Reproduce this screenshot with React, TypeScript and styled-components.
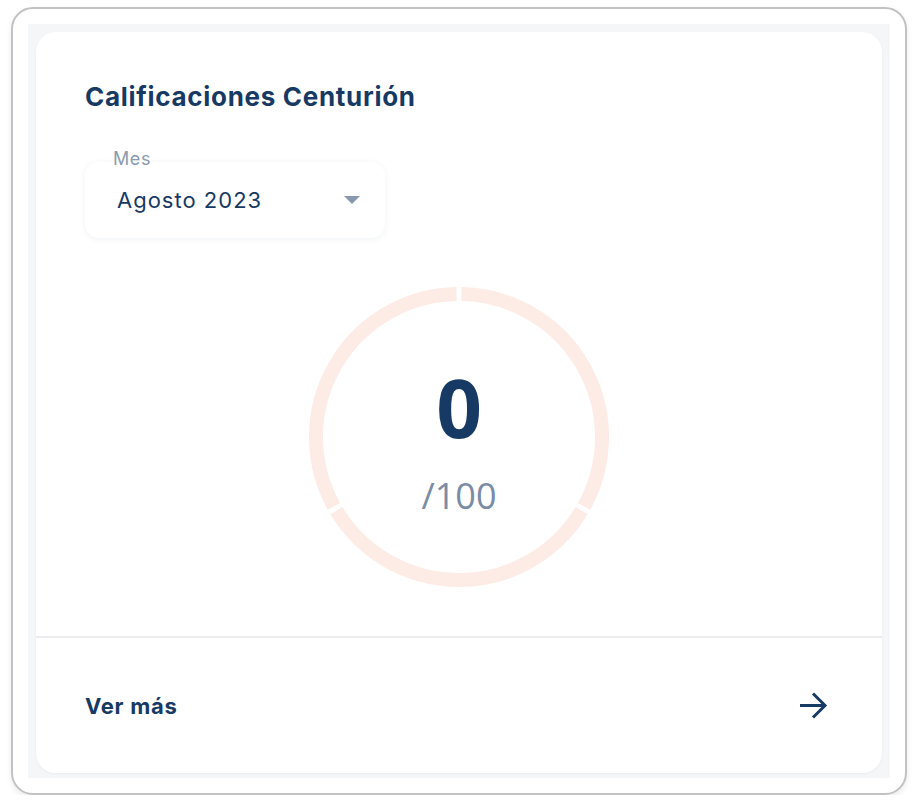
import React from 'react'
import styled, { createGlobalStyle } from 'styled-components'

const GlobalStyle = createGlobalStyle`
  body {
    margin: 0;
    background: #ffffff;
    font-family: Inter, 'Liberation Sans', sans-serif;
  }
`

const Frame = styled.div`
  box-sizing: border-box;
  margin: 7px 0 0 11px;
  width: 896px;
  height: 788px;
  padding: 15px;
  border: 2px solid #c2c2c2;
  border-radius: 22px;
  background: #ffffff;
  box-shadow: 0 3px 6px rgba(0, 0, 0, 0.08);
`

const Backdrop = styled.div`
  box-sizing: border-box;
  height: 100%;
  padding: 8px 8px 5px 8px;
  background: #f5f6f8;
`

const Card = styled.div`
  box-sizing: border-box;
  height: 100%;
  display: flex;
  flex-direction: column;
  background: #ffffff;
  border-radius: 20px;
  box-shadow: 0 1px 3px rgba(30, 50, 80, 0.05);
`

const Body = styled.div`
  flex: 1;
  display: flex;
  flex-direction: column;
  padding: 50px 49px 0 49px;
`

const Title = styled.h2`
  margin: 0;
  font-size: 26px;
  line-height: 30px;
  letter-spacing: 0.7px;
  font-weight: 700;
  color: #173a64;
`

const SelectWrap = styled.div`
  position: relative;
  margin-top: 50px;
  width: 300px;
  height: 76px;
  border-radius: 14px;
  background: #ffffff;
  box-shadow: 0 1px 6px rgba(30, 50, 80, 0.07);
  display: flex;
  align-items: center;
  justify-content: space-between;
  padding: 0 25px 0 32px;
  box-sizing: border-box;
`

const SelectLabel = styled.span`
  position: absolute;
  left: 28px;
  top: -13px;
  font-size: 18px;
  line-height: 20px;
  letter-spacing: 0.6px;
  color: #8b9bb2;
`

const SelectValue = styled.span`
  font-size: 22px;
  letter-spacing: 1px;
  color: #173a64;
`

const Caret = styled.span`
  width: 0;
  height: 0;
  border-left: 8px solid transparent;
  border-right: 8px solid transparent;
  border-top: 8px solid #8797ae;
`

const GaugeBox = styled.div`
  position: relative;
  align-self: center;
  margin-top: 49px;
  width: 300px;
  height: 300px;
`

const GaugeText = styled.div`
  position: absolute;
  inset: 0;
  display: flex;
  flex-direction: column;
  align-items: center;
  font-family: 'Open Sans', sans-serif;
  padding-top: 80px;
`

const Score = styled.div`
  font-size: 80px;
  line-height: 80px;
  font-weight: 700;
  color: #173a64;
`

const OutOf = styled.div`
  font-size: 36px;
  line-height: 44px;
  color: #7a8ca6;
  margin-top: 27px;
`

const Footer = styled.a`
  height: 137px;
  border-top: 2px solid #ececee;
  display: flex;
  align-items: center;
  justify-content: space-between;
  padding: 0 53px 0 49px;
  text-decoration: none;
  font-size: 22px;
  letter-spacing: 0.7px;
  font-weight: 700;
  color: #173a64;
  box-sizing: border-box;
`

function arc(cx: number, cy: number, r: number, a0: number, a1: number) {
  const p = (a: number) => {
    const rad = (a * Math.PI) / 180
    return [cx + r * Math.sin(rad), cy - r * Math.cos(rad)]
  }
  const [x0, y0] = p(a0)
  const [x1, y1] = p(a1)
  return `M${x0} ${y0} A${r} ${r} 0 0 1 ${x1} ${y1}`
}

function Gauge({ value, max }: { value: number; max: number }) {
  const gap = 1
  const segments = [0, 120, 240]
  return (
    <GaugeBox>
      <svg width="300" height="300" viewBox="0 0 300 300">
        {segments.map((s) => (
          <path
            key={s}
            d={arc(150, 150, 143, s + gap, s + 120 - gap)}
            fill="none"
            stroke="#fdebe5"
            strokeWidth="14"
          />
        ))}
      </svg>
      <GaugeText>
        <Score>{value}</Score>
        <OutOf>/{max}</OutOf>
      </GaugeText>
    </GaugeBox>
  )
}

export default function App() {
  return (
    <>
      <GlobalStyle />
      <Frame>
        <Backdrop>
          <Card>
            <Body>
              <Title>Calificaciones Centurión</Title>
              <SelectWrap>
                <SelectLabel>Mes</SelectLabel>
                <SelectValue>Agosto 2023</SelectValue>
                <Caret />
              </SelectWrap>
              <Gauge value={0} max={100} />
            </Body>
            <Footer href="#">
              Ver más
              <svg width="30" height="28" viewBox="0 0 30 28">
                <path
                  d="M1 13.5h25M14 1.5l12 12-12 12"
                  fill="none"
                  stroke="#173a64"
                  strokeWidth="3"
                />
              </svg>
            </Footer>
          </Card>
        </Backdrop>
      </Frame>
    </>
  )
}
